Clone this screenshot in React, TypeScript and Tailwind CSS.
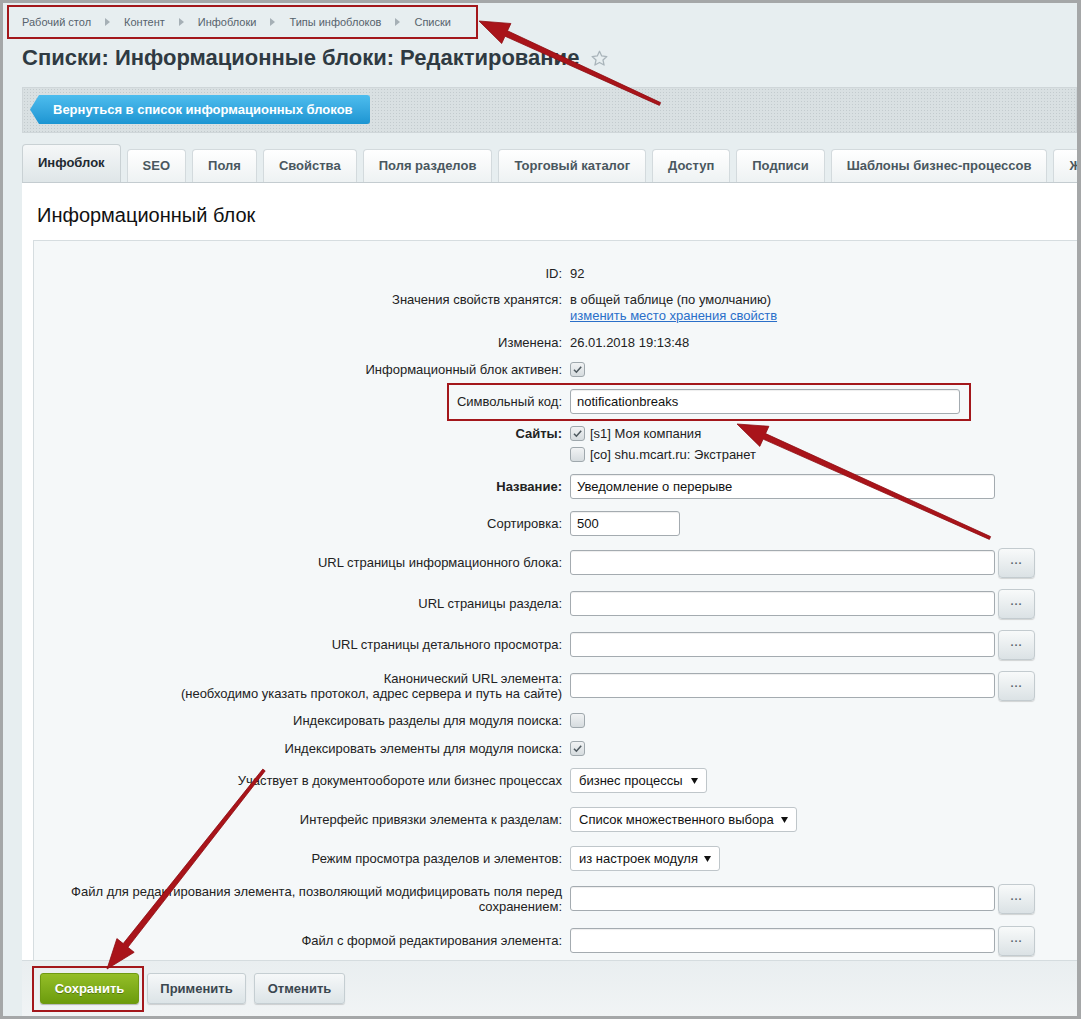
import React from 'react';

// Bitrix-style admin form: "Информационный блок" edit screen with callouts.

const crumbs = ['Рабочий стол', 'Контент', 'Инфоблоки', 'Типы инфоблоков', 'Списки'];

const tabs = [
  'SEO',
  'Поля',
  'Свойства',
  'Поля разделов',
  'Торговый каталог',
  'Доступ',
  'Подписи',
  'Шаблоны бизнес-процессов',
  'Журнал',
];

export default function App() {
  return (
    <div className="relative h-[1019px] w-[1081px] overflow-hidden border-t-[3px] border-b-[3px] border-l-[3px] border-r-[4px] border-[#a5a7a8] bg-[#e7eef0] font-['Liberation_Sans',Arial,sans-serif] text-[13px] text-[#222]">
      <div className="pl-[19px]">
        {/* breadcrumbs */}
        <div className="flex h-[38px] items-center text-[11px] text-[#56626c]">
          {crumbs.map((c, i) => (
            <React.Fragment key={c}>
              {i > 0 && <CrumbArrow />}
              <span>{c}</span>
            </React.Fragment>
          ))}
        </div>

        {/* page title */}
        <div className="flex h-[32px] items-center gap-[11px]">
          <h1 className="text-[22px] font-bold text-[#2f3a42]">
            Списки: Информационные блоки: Редактирование
          </h1>
          <svg width="19" height="19" viewBox="0 0 24 24" fill="none" stroke="#a9b4ba" strokeWidth="1.6" strokeLinejoin="round" className="mt-[3px]">
            <path d="M12 2.8l2.8 6 6.5.7-4.9 4.4 1.4 6.4L12 17l-5.8 3.3 1.4-6.4-4.9-4.4 6.5-.7z" />
          </svg>
        </div>

        {/* toolbar */}
        <div className="mt-[14px] h-[46px] border border-[#cfd6d9] bg-[#d9e0e2] bg-[radial-gradient(#c3cbce_0.8px,transparent_0.8px)] bg-[length:3px_3px] pl-[7px] pt-[7px]">
          <div className="flex h-[29px] w-[340px] items-center rounded-r-[3px] bg-gradient-to-b from-[#4dbdee] to-[#1b95d2] pl-[23px] text-[13px] font-bold text-white [clip-path:polygon(9px_0,100%_0,100%_100%,9px_100%,0_50%)] shadow-[0_1px_1px_rgba(0,0,0,0.2)]">
            Вернуться в список информационных блоков
          </div>
        </div>

        {/* tabs */}
        <div className="mt-[11px] flex h-[38px] items-end gap-[6px] overflow-hidden">
          <div className="flex h-[38px] shrink-0 items-center rounded-t-[4px] border border-b-0 border-[#c9d1d4] bg-gradient-to-b from-[#f5f7f8] to-[#dfe6e8] px-[15px] pb-[2px] font-bold text-[#1f2a30]">
            Инфоблок
          </div>
          {tabs.map((t) => (
            <div
              key={t}
              className="flex h-[33px] shrink-0 items-center rounded-t-[4px] border border-b-0 border-[#d3dadd] bg-gradient-to-b from-white to-[#eef2f3] px-[15px] font-bold text-[#4a575f]"
            >
              {t}
            </div>
          ))}
        </div>

        {/* panel */}
        <div className="border-t border-[#c4ccd0] bg-white">
          <div className="h-[57px] pl-[15px] pt-[21px] text-[20px] leading-[22px] text-[#111]">
            Информационный блок
          </div>
          <div className="ml-[11px] h-[720px] overflow-hidden border-l border-t border-[#d6dde0] bg-[#f5f8f9] pt-[19px]">
            <Row h="h-[27px]" label="ID:">92</Row>
            <div className="flex h-[42px] items-start pt-[5px] leading-[16px]">
              <div className="w-[528px] shrink-0 text-right">Значения свойств хранятся:</div>
              <div className="pl-[8px]">
                <div>в общей таблице (по умолчанию)</div>
                <div className="text-[#2a6fc9] underline">изменить место хранения свойств</div>
              </div>
            </div>
            <Row h="h-[27px]" label="Изменена:">26.01.2018 19:13:48</Row>
            <Row h="h-[27px]" label="Информационный блок активен:">
              <Check on />
            </Row>
            <Row h="h-[37px]" label="Символьный код:">
              <Field w="w-[390px]" value="notificationbreaks" />
            </Row>
            <div className="flex h-[48px] items-start pt-[3px]">
              <div className="w-[528px] shrink-0 pt-[2px] text-right font-bold leading-[17px]">Сайты:</div>
              <div className="pl-[8px]">
                <div className="flex h-[21px] items-center gap-[5px]">
                  <Check on />
                  <span>[s1] Моя компания</span>
                </div>
                <div className="flex h-[21px] items-center gap-[5px]">
                  <Check />
                  <span>[co] shu.mcart.ru: Экстранет</span>
                </div>
              </div>
            </div>
            <Row h="h-[37px]" label="Название:" bold>
              <Field w="w-[425px]" value="Уведомление о перерыве" />
            </Row>
            <Row h="h-[37px]" label="Сортировка:">
              <Field w="w-[110px]" value="500" />
            </Row>
            <Row h="h-[41px]" label="URL страницы информационного блока:">
              <PathField />
            </Row>
            <Row h="h-[41px]" label="URL страницы раздела:">
              <PathField />
            </Row>
            <Row h="h-[41px]" label="URL страницы детального просмотра:">
              <PathField />
            </Row>
            <Row
              h="h-[41px]"
              label={
                <>
                  Канонический URL элемента:
                  <br />
                  (необходимо указать протокол, адрес сервера и путь на сайте)
                </>
              }
            >
              <PathField />
            </Row>
            <Row h="h-[29px]" label="Индексировать разделы для модуля поиска:">
              <Check />
            </Row>
            <Row h="h-[27px]" label="Индексировать элементы для модуля поиска:">
              <Check on />
            </Row>
            <Row h="h-[37px]" label="Участвует в документообороте или бизнес процессах">
              <Select w="w-[137px]" value="бизнес процессы" />
            </Row>
            <Row h="h-[41px]" label="Интерфейс привязки элемента к разделам:">
              <Select w="w-[227px]" value="Список множественного выбора" />
            </Row>
            <Row h="h-[37px]" label="Режим просмотра разделов и элементов:">
              <Select w="w-[150px]" value="из настроек модуля" />
            </Row>
            <Row
              h="h-[43px]"
              label={
                <>
                  Файл для редактирования элемента, позволяющий модифицировать поля перед
                  <br />
                  сохранением:
                </>
              }
            >
              <PathField />
            </Row>
            <Row h="h-[41px]" label="Файл с формой редактирования элемента:">
              <PathField />
            </Row>
          </div>
        </div>

        {/* bottom buttons */}
        <div className="flex h-[56px] gap-[8px] border-t border-[#d5dcdf] bg-gradient-to-b from-[#e9eef0] to-[#f1f4f5] pl-[18px] pt-[12px]">
          <button className="h-[31px] w-[99px] rounded-[3px] border border-[#6f9a12] bg-gradient-to-b from-[#94be27] to-[#6c9c0c] text-[13px] font-bold text-white shadow-[0_1px_1px_rgba(0,0,0,0.25)] [text-shadow:0_1px_0_rgba(0,0,0,0.3)]">
            Сохранить
          </button>
          <GrayButton w="w-[99px]">Применить</GrayButton>
          <GrayButton w="w-[91px]">Отменить</GrayButton>
        </div>
      </div>

      <Callouts />
    </div>
  );
}

function Row({
  h,
  label,
  bold,
  children,
}: {
  h: string;
  label: React.ReactNode;
  bold?: boolean;
  children: React.ReactNode;
}) {
  return (
    <div className={`flex items-center ${h}`}>
      <div className={`w-[528px] shrink-0 text-right leading-[15px] ${bold ? 'font-bold' : ''}`}>{label}</div>
      <div className="flex items-center pl-[8px]">{children}</div>
    </div>
  );
}

function Field({ w, value = '' }: { w: string; value?: string }) {
  return (
    <input
      readOnly
      value={value}
      className={`h-[25px] rounded-[3px] border border-[#a4abb0] bg-white px-[6px] text-[13px] text-[#111] shadow-[inset_0_1px_1px_rgba(0,0,0,0.07)] outline-none ${w}`}
    />
  );
}

function PathField() {
  return (
    <div className="flex items-center gap-[3px]">
      <Field w="w-[425px]" />
      <button className="h-[30px] w-[37px] rounded-[4px] border border-[#c3cbcf] bg-gradient-to-b from-[#f8fafa] to-[#dbe2e5] pb-[4px] text-[11px] font-bold tracking-[1px] text-[#5a666d] shadow-[0_1px_1px_rgba(0,0,0,0.15)]">
        ...
      </button>
    </div>
  );
}

function Select({ w, value }: { w: string; value: string }) {
  return (
    <div className={`flex h-[25px] items-center justify-between rounded-[3px] border border-[#bfc6ca] bg-white pl-[8px] pr-[8px] text-[13px] text-[#111] ${w}`}>
      <span>{value}</span>
      <svg width="7" height="6" viewBox="0 0 7 6">
        <path d="M0 0h7L3.5 6z" fill="#111" />
      </svg>
    </div>
  );
}

function Check({ on }: { on?: boolean }) {
  return (
    <span className="flex h-[15px] w-[15px] items-center justify-center rounded-[3px] border border-[#9fa8ad] bg-gradient-to-b from-[#f1f3f4] to-[#d6dcdf]">
      {on && (
        <svg width="11" height="11" viewBox="0 0 11 11" fill="none" stroke="#4f5a60" strokeWidth="1.6">
          <path d="M2 5.8l2.4 2.4L9.2 2.8" />
        </svg>
      )}
    </span>
  );
}

function GrayButton({ w, children }: { w: string; children: React.ReactNode }) {
  return (
    <button className={`h-[31px] rounded-[3px] border border-[#c5ced2] bg-gradient-to-b from-[#f6f8f9] to-[#dce4e7] text-[13px] font-bold text-[#3b474f] shadow-[0_1px_1px_rgba(0,0,0,0.15)] ${w}`}>
      {children}
    </button>
  );
}

const CrumbArrow = () => (
  <svg width="5" height="8" viewBox="0 0 5 8" className="mx-[14px]">
    <path d="M0 0l5 4-5 4z" fill="#a6b0b6" />
  </svg>
);

/* ─── red callout boxes and arrows ────────────────────────── */
function arrow(x1: number, y1: number, x2: number, y2: number) {
  const len = Math.hypot(x2 - x1, y2 - y1);
  const ux = (x2 - x1) / len;
  const uy = (y2 - y1) / len;
  const nx = -uy;
  const ny = ux;
  const head = 30;
  const bx = x2 - ux * head;
  const by = y2 - uy * head;
  const p = (x: number, y: number) => `${x.toFixed(1)},${y.toFixed(1)}`;
  return [
    p(x1 + nx * 1.5, y1 + ny * 1.5),
    p(bx + nx * 3, by + ny * 3),
    p(bx + nx * 11, by + ny * 11),
    p(x2, y2),
    p(bx - nx * 11, by - ny * 11),
    p(bx - nx * 3, by - ny * 3),
    p(x1 - nx * 1.5, y1 - ny * 1.5),
  ].join(' ');
}

function Callouts() {
  return (
    <svg width="1081" height="1019" className="pointer-events-none absolute left-[-3px] top-[-3px]">
      <g fill="none" stroke="#a3171b" strokeWidth="2">
        <rect x="8" y="6" width="469" height="32" />
        <rect x="448" y="384" width="522" height="36" />
        <rect x="33" y="967" width="110" height="44" />
      </g>
      <g fill="#a9141a" stroke="#8e0d12" strokeWidth="0.8" strokeLinejoin="round">
        <polygon points={arrow(660, 104, 479, 21)} />
        <polygon points={arrow(990, 538, 737, 424)} />
        <polygon points={arrow(264, 770, 107, 969)} />
      </g>
    </svg>
  );
}
